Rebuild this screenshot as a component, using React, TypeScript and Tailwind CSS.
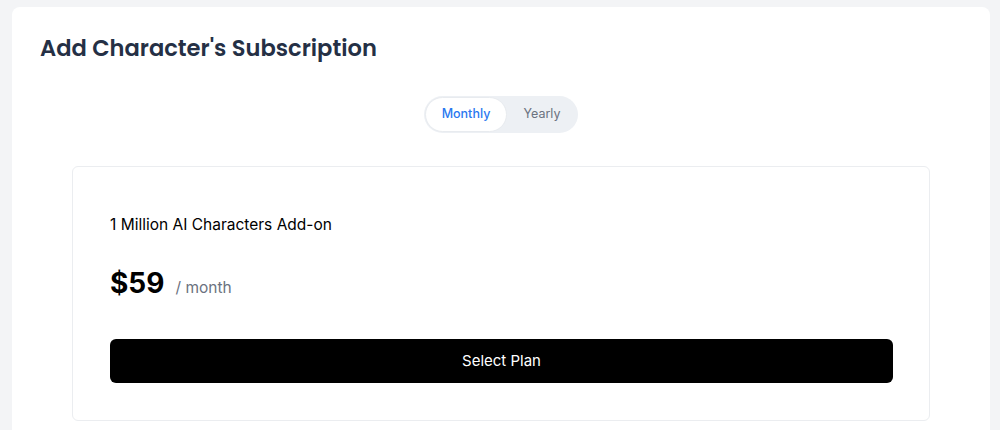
import { useState } from "react";

export default function App() {
  const [period, setPeriod] = useState<"monthly" | "yearly">("monthly");

  return (
    <div className="min-h-[430px] bg-[#f3f4f6] pl-3 pr-[10px] pt-[7px] font-['Inter',sans-serif]">
      <div className="rounded-lg bg-white px-7 pt-[25px] pb-10">
        <h1 className="font-['Poppins','Inter',sans-serif] text-[22.6px] font-semibold leading-8 text-[#253045]">
          Add Character's Subscription
        </h1>

        <div className="mt-8 flex justify-center">
          <div className="flex h-[37px] items-center rounded-full bg-[#edf0f4] p-px">
            <button
              onClick={() => setPeriod("monthly")}
              className={
                period === "monthly"
                  ? "h-full w-[82px] rounded-full border border-[#e8ebef] bg-white text-[12.5px] font-medium text-[#2a78f0]"
                  : "h-full w-[82px] rounded-full text-[12.5px] text-[#6b7280]"
              }
            >
              Monthly
            </button>
            <button
              onClick={() => setPeriod("yearly")}
              className={
                period === "yearly"
                  ? "h-full w-[70px] rounded-full border border-[#e8ebef] bg-white text-[12.5px] font-medium text-[#2a78f0]"
                  : "h-full w-[70px] rounded-full text-[12.5px] text-[#6b7280]"
              }
            >
              Yearly
            </button>
          </div>
        </div>

        <div className="mt-[33px] px-8">
          <div className="rounded-md border border-[#ebedf0] pl-[37px] pr-[36px] pt-[46px] pb-[37px]">
            <p className="text-[15.5px] leading-6 text-black">1 Million AI Characters Add-on</p>
            <div className="mt-[30px] flex h-8 items-baseline gap-[11px]">
              <span className="text-[28px] font-bold leading-8 text-black">
                {period === "monthly" ? "$59" : "$590"}
              </span>
              <span className="text-[15.5px] text-[#6b7280]">
                / {period === "monthly" ? "month" : "year"}
              </span>
            </div>
            <button className="mt-10 flex h-11 w-full items-center justify-center rounded-md bg-black text-[15px] text-white">
              Select Plan
            </button>
          </div>
        </div>
      </div>
    </div>
  );
}
